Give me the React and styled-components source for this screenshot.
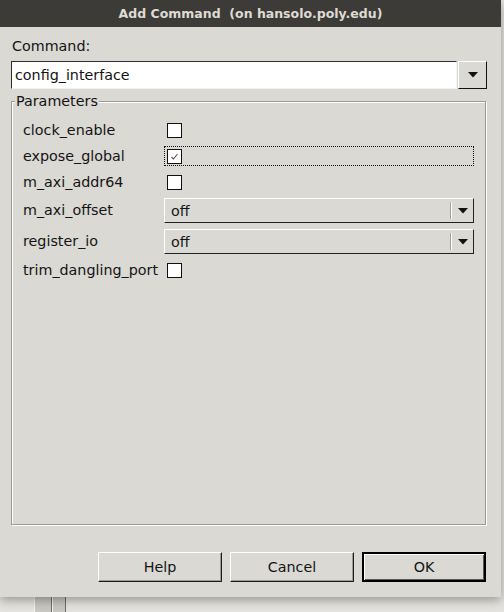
import React from 'react';
import styled, { createGlobalStyle } from 'styled-components';

const GlobalStyle = createGlobalStyle`
  html, body {
    margin: 0;
    padding: 0;
    background: #e4e3df;
    overflow: hidden;
  }
  body {
    font-family: "DejaVu Sans", sans-serif;
    font-size: 14.3px;
    color: #141414;
  }
`;

const Screen = styled.div`
  width: 504px;
  height: 612px;
  display: flex;
  flex-direction: column;
`;

const Dialog = styled.div`
  width: 501px;
  height: 597px;
  background: #dad9d4;
  display: flex;
  flex-direction: column;
  box-shadow: 0 3px 10px rgba(0, 0, 0, 0.35);
  position: relative;
  z-index: 1;
`;

const TitleBar = styled.div`
  height: 27px;
  background: #3c3b37;
  color: #dfdbd2;
  font-weight: bold;
  font-size: 12.5px;
  display: flex;
  align-items: center;
  justify-content: center;
  white-space: pre;
`;

const Body = styled.div`
  flex: 1;
  display: flex;
  flex-direction: column;
  padding: 11px 14px 15px 11px;
`;

const Label = styled.div`
  line-height: 17px;
  padding-left: 1px;
`;

const CommandRow = styled.div`
  display: flex;
  height: 28px;
  margin-top: 6px;
`;

const Entry = styled.div`
  flex: 1;
  background: #fff;
  border: 1px solid;
  border-color: #2e2e2e #f2f2f2 #f2f2f2 #2e2e2e;
  display: flex;
  align-items: center;
  padding-left: 3px;
  margin-right: 1px;
`;

const ArrowButton = styled.div`
  width: 29px;
  box-sizing: border-box;
  border: 1px solid;
  border-color: #fff #111 #111 #fff;
  display: flex;
  align-items: center;
  justify-content: center;
`;

const Arrow = () => (
  <svg width="10" height="6" viewBox="0 0 10 6">
    <polygon points="0,0 10,0 5,5.5" fill="#111" />
  </svg>
);

const Group = styled.fieldset`
  flex: 1;
  margin: 4px 1px 0 0;
  padding: 7px 11px 0 11px;
  border: 1px solid #9c9a95;
  box-shadow: 1px 1px 0 #fff, inset 1px 1px 0 #fff;
  min-width: 0;
`;

const Legend = styled.legend`
  line-height: 17px;
  padding: 0 1px;
  margin-left: -8px;
  background: #dad9d4;
`;

const Params = styled.div`
  display: grid;
  grid-template-columns: 141px 1fr;
  align-items: center;
`;

const ParamName = styled.div`
  line-height: 17px;
`;

const Cell = styled.div`
  padding: 3px 0;
`;

const Check = styled.div`
  height: 20px;
  box-sizing: border-box;
  display: flex;
  align-items: center;
  padding-left: 2px;
  border: 1px dotted ${(p) => (p.$focus ? '#111' : 'transparent')};
`;

const Box = styled.div`
  width: 13px;
  height: 13px;
  background: #fff;
  border: 1px solid #111;
  display: flex;
  align-items: center;
  justify-content: center;
`;

const Select = styled.div`
  height: 25px;
  box-sizing: border-box;
  border: 1px solid;
  border-color: #fff #222 #222 #fff;
  display: flex;
  align-items: center;
  padding-left: 6px;
`;

const SelectText = styled.span`
  flex: 1;
`;

const SelectSep = styled.span`
  width: 1px;
  height: 17px;
  background: #fff;
  border-left: 1px solid #a3a19c;
`;

const SelectArrow = styled.span`
  width: 21px;
  display: flex;
  justify-content: center;
`;

const Buttons = styled.div`
  display: flex;
  justify-content: flex-end;
  gap: 8px;
  margin-top: 27px;
  padding-right: 1px;
`;

const Button = styled.div`
  width: 124px;
  height: 30px;
  box-sizing: border-box;
  display: flex;
  align-items: center;
  justify-content: center;
  border: 1px solid;
  border-color: #fff #1e1e1e #1e1e1e #fff;
  box-shadow: inset -1px -1px 0 #9c9a95;
  ${(p) =>
    p.$default &&
    `
    border-width: 2px;
    border-color: #000;
    box-shadow: inset 1px 1px 0 #fff, inset -1px -1px 0 #5a5955;
  `}
`;

const Behind = styled.div`
  flex: 1;
  display: flex;
  padding-left: 34px;
`;

const Bar = styled.div`
  width: ${(p) => p.$w}px;
  background: #c9c7c1;
  border-left: 1px solid #f4f3f0;
  border-right: 1px solid #6f6d68;
`;

const Tick = () => (
  <svg width="9" height="9" viewBox="0 0 9 9">
    <polyline points="1.5,5 3.5,7 7.5,2" fill="none" stroke="#555" strokeWidth="1.1" />
  </svg>
);

const params = [
  { name: 'clock_enable', type: 'check' },
  { name: 'expose_global', type: 'check', checked: true, focus: true },
  { name: 'm_axi_addr64', type: 'check' },
  { name: 'm_axi_offset', type: 'select', value: 'off' },
  { name: 'register_io', type: 'select', value: 'off' },
  { name: 'trim_dangling_port', type: 'check' },
];

export default function App() {
  return (
    <Screen>
      <GlobalStyle />
      <Dialog>
        <TitleBar>Add Command  (on hansolo.poly.edu)</TitleBar>
        <Body>
          <Label>Command:</Label>
          <CommandRow>
            <Entry>config_interface</Entry>
            <ArrowButton>
              <Arrow />
            </ArrowButton>
          </CommandRow>
          <Group>
            <Legend>Parameters</Legend>
            <Params>
              {params.map((p) => (
                <React.Fragment key={p.name}>
                  <ParamName>{p.name}</ParamName>
                  <Cell>
                    {p.type === 'check' ? (
                      <Check $focus={p.focus}>
                        <Box>{p.checked && <Tick />}</Box>
                      </Check>
                    ) : (
                      <Select>
                        <SelectText>{p.value}</SelectText>
                        <SelectSep />
                        <SelectArrow>
                          <Arrow />
                        </SelectArrow>
                      </Select>
                    )}
                  </Cell>
                </React.Fragment>
              ))}
            </Params>
          </Group>
          <Buttons>
            <Button>Help</Button>
            <Button>Cancel</Button>
            <Button $default>OK</Button>
          </Buttons>
        </Body>
      </Dialog>
      <Behind>
        <Bar $w={16} />
        <Bar $w={12} />
      </Behind>
    </Screen>
  );
}
